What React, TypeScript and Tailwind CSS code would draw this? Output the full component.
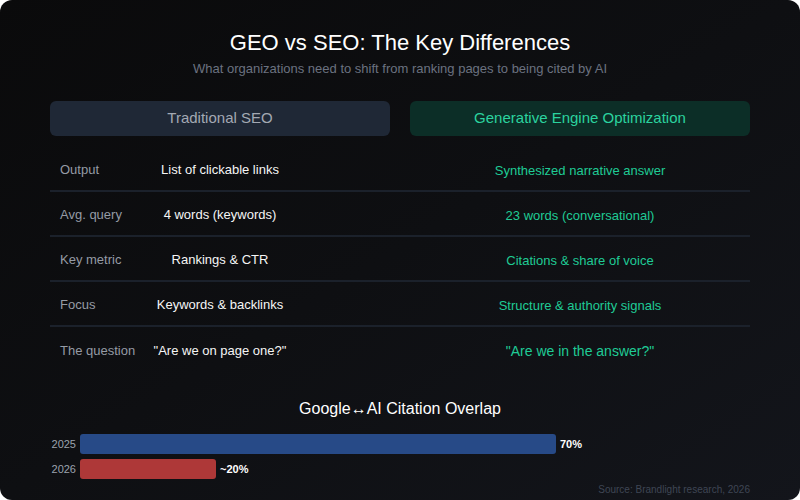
import React from "react";

// ---------------------------------------------------------------------------
// Data
// ---------------------------------------------------------------------------

interface Row {
  label: string;
  seo: string;
  geo: string;
  emphasis?: boolean;
}

const ROWS: Row[] = [
  { label: "Output", seo: "List of clickable links", geo: "Synthesized narrative answer" },
  { label: "Avg. query", seo: "4 words (keywords)", geo: "23 words (conversational)" },
  { label: "Key metric", seo: "Rankings & CTR", geo: "Citations & share of voice" },
  { label: "Focus", seo: "Keywords & backlinks", geo: "Structure & authority signals" },
  { label: "The question", seo: "\"Are we on page one?\"", geo: "\"Are we in the answer?\"", emphasis: true },
];

const BARS = [
  { year: "2025", value: 70, label: "70%", color: "bg-[#274a87]" },
  { year: "2026", value: 20, label: "~20%", color: "bg-[#ae3838]" },
];

const TRACK = 680;

// ---------------------------------------------------------------------------
// Comparison row
// ---------------------------------------------------------------------------

function CompareRow({ row, last }: { row: Row; last: boolean }) {
  return (
    <div
      className={
        "grid grid-cols-2 gap-5 h-[45px] pt-[3px] items-center " +
        (last ? "" : "border-b-2 border-[#1b212b]")
      }
    >
      <div className="grid grid-cols-[1fr_auto_1fr] items-center">
        <span className="pl-[10px] text-[13px] text-[#959ba5] whitespace-nowrap">{row.label}</span>
        <span className="text-[13px] font-medium text-[#f5f5f5] whitespace-nowrap">{row.seo}</span>
        <span />
      </div>
      <div className="text-center">
        <span
          className={
            "font-medium text-[#1fcb95] whitespace-nowrap " +
            (row.emphasis ? "text-[14px]" : "text-[13px]")
          }
        >
          {row.geo}
        </span>
      </div>
    </div>
  );
}

// ---------------------------------------------------------------------------
// Main
// ---------------------------------------------------------------------------

export default function App() {
  return (
    <div className="w-[800px] h-[500px] bg-white" style={{ fontFamily: "'Liberation Sans', Arial, sans-serif" }}>
      <div className="w-full h-full rounded-[12px] overflow-hidden bg-gradient-to-br from-[#0a0a0b] via-[#0e0f12] to-[#13151b] flex flex-col px-[50px]">
        {/* Header */}
        <h1 className="mt-[29px] text-center text-[22px] leading-[28px] font-medium text-white">
          GEO vs SEO: The Key Differences
        </h1>
        <p className="mt-[3px] text-center text-[13px] leading-[18px] text-[#6b7280]">
          What organizations need to shift from ranking pages to being cited by AI
        </p>

        {/* Column headers */}
        <div className="mt-[23px] grid grid-cols-2 gap-5">
          <div className="h-[35px] rounded-[6px] bg-[#1f2836] flex items-center justify-center text-[15px] text-[#a3a9b3]">
            Traditional SEO
          </div>
          <div className="h-[35px] rounded-[6px] bg-[#0c2e27] flex items-center justify-center text-[15px] text-[#2bd39f]">
            Generative Engine Optimization
          </div>
        </div>

        {/* Rows */}
        <div className="mt-[11px] flex flex-col">
          {ROWS.map((row, i) => (
            <CompareRow key={row.label} row={row} last={i === ROWS.length - 1} />
          ))}
        </div>

        {/* Chart */}
        <h2 className="mt-[27px] text-center text-[16px] leading-[20px] font-medium text-white">
          Google↔AI Citation Overlap
        </h2>
        <div className="mt-[15px] flex flex-col gap-[5px]">
          {BARS.map((b) => (
            <div key={b.year} className="flex items-center h-[20px]">
              <span className="w-[26px] text-right text-[11px] text-[#9ca3af]">{b.year}</span>
              <div className="ml-[4px] flex items-center">
                <div
                  className={"h-[20px] rounded-[3px] " + b.color}
                  style={{ width: (TRACK * b.value) / 100 }}
                />
                <span className="ml-[4px] text-[11px] font-bold text-white">{b.label}</span>
              </div>
            </div>
          ))}
        </div>
        <p className="mt-[5px] text-right text-[10px] leading-[12px] text-[#3f4654]">
          Source: Brandlight research, 2026
        </p>
      </div>
    </div>
  );
}
